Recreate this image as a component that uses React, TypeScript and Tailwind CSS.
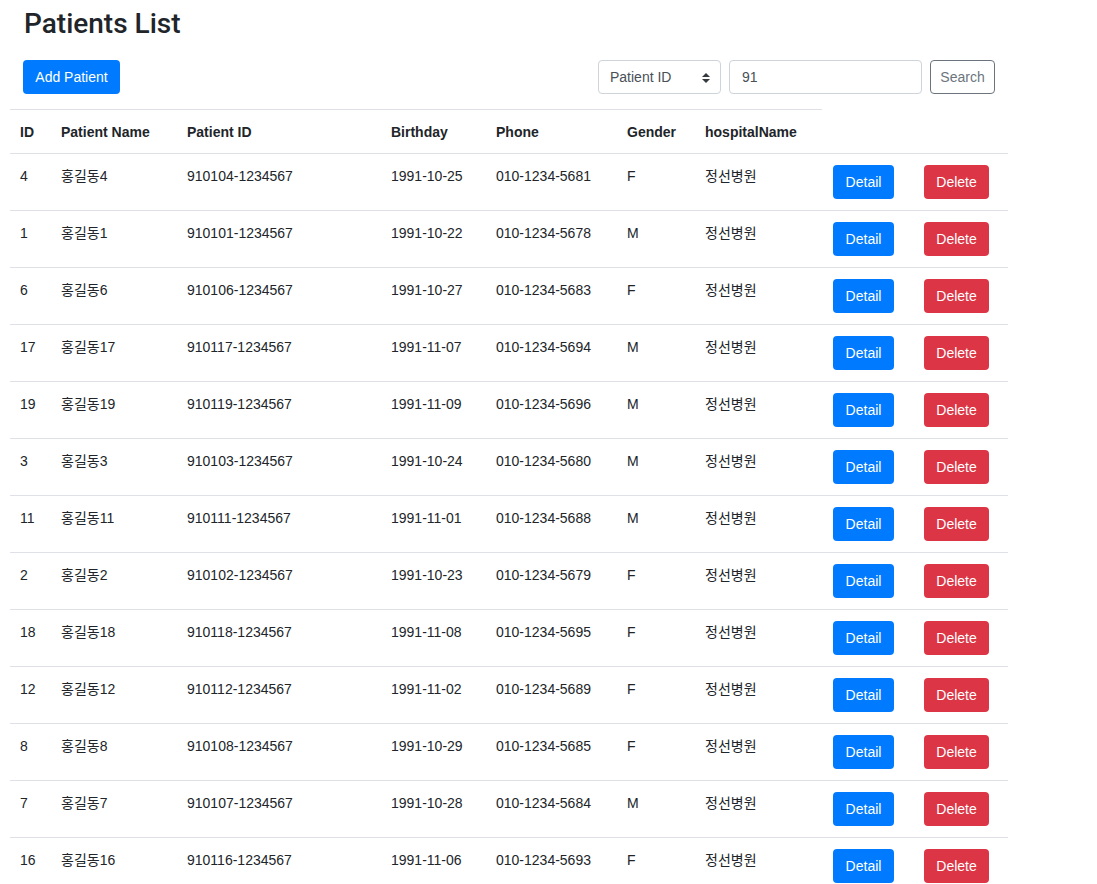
import React from "react";

const rows: [string, string, string, string, string, string][] = [
  ["4", "홍길동4", "910104-1234567", "1991-10-25", "010-1234-5681", "F"],
  ["1", "홍길동1", "910101-1234567", "1991-10-22", "010-1234-5678", "M"],
  ["6", "홍길동6", "910106-1234567", "1991-10-27", "010-1234-5683", "F"],
  ["17", "홍길동17", "910117-1234567", "1991-11-07", "010-1234-5694", "M"],
  ["19", "홍길동19", "910119-1234567", "1991-11-09", "010-1234-5696", "M"],
  ["3", "홍길동3", "910103-1234567", "1991-10-24", "010-1234-5680", "M"],
  ["11", "홍길동11", "910111-1234567", "1991-11-01", "010-1234-5688", "M"],
  ["2", "홍길동2", "910102-1234567", "1991-10-23", "010-1234-5679", "F"],
  ["18", "홍길동18", "910118-1234567", "1991-11-08", "010-1234-5695", "F"],
  ["12", "홍길동12", "910112-1234567", "1991-11-02", "010-1234-5689", "F"],
  ["8", "홍길동8", "910108-1234567", "1991-10-29", "010-1234-5685", "F"],
  ["7", "홍길동7", "910107-1234567", "1991-10-28", "010-1234-5684", "M"],
  ["16", "홍길동16", "910116-1234567", "1991-11-06", "010-1234-5693", "F"],
];

const headers = ["ID", "Patient Name", "Patient ID", "Birthday", "Phone", "Gender", "hospitalName"];

export default function App() {
  return (
    <div
      className="min-h-screen bg-white text-[14px] leading-[21px] text-[#212529]"
      style={{ fontFamily: '"Liberation Sans", "Noto Sans CJK KR", sans-serif' }}
    >
      <h1
        className="pl-[24px] pt-[7px] text-[28px] leading-[34px] font-medium text-[#212529]"
        style={{ fontFamily: 'Roboto, "Liberation Sans", sans-serif' }}
      >
        Patients List
      </h1>
      <div className="mt-[19px] flex items-center justify-between pl-[23px] pr-[102px]">
        <button className="h-[34px] w-[97px] rounded-[4px] bg-[#007bff] text-[14px] text-white">
          Add Patient
        </button>
        <div className="flex items-center gap-[8px]">
          <div className="relative flex h-[34px] w-[123px] items-center rounded-[4px] border border-[#ced4da] pl-[11px] text-[#495057]">
            Patient ID
            <svg className="absolute right-[10px] top-[12px]" width="8" height="10" viewBox="0 0 8 10">
              <path d="M4 0 L8 4 H0 Z" fill="#343a40" />
              <path d="M4 10 L0 6 H8 Z" fill="#343a40" />
            </svg>
          </div>
          <div className="flex h-[34px] w-[193px] items-center rounded-[4px] border border-[#ced4da] pl-[12px] text-[#495057]">
            91
          </div>
          <button className="h-[34px] w-[65px] rounded-[4px] border border-[#6c757d] text-[14px] text-[#6c757d]">
            Search
          </button>
        </div>
      </div>
      <table className="ml-[10px] mt-[15px] w-[998px] table-fixed border-collapse">
        <colgroup>
          <col className="w-[41px]" />
          <col className="w-[126px]" />
          <col className="w-[204px]" />
          <col className="w-[105px]" />
          <col className="w-[131px]" />
          <col className="w-[78px]" />
          <col className="w-[127px]" />
          <col className="w-[91px]" />
          <col className="w-[95px]" />
        </colgroup>
        <thead>
          <tr>
            {headers.map((h) => (
              <th
                key={h}
                className="border-t border-[#dee2e6] px-[10px] pt-[11.5px] pb-[10.5px] text-left align-bottom font-bold"
              >
                {h}
              </th>
            ))}
          </tr>
        </thead>
        <tbody>
          {rows.map((r) => (
            <tr key={r[0]}>
              {r.map((c, i) => (
                <td key={i} className="border-t border-[#dee2e6] px-[10px] pt-[11.5px] pb-[10.5px] align-top">
                  {c}
                </td>
              ))}
              <td className="border-t border-[#dee2e6] px-[10px] pt-[11.5px] pb-[10.5px] align-top">
                정선병원
              </td>
              <td className="border-t border-[#dee2e6] px-[10px] pt-[11px] pb-[11px] align-top">
                <button className="ml-[1px] block h-[34px] w-[61px] rounded-[4px] bg-[#007bff] text-[14px] text-white">
                  Detail
                </button>
              </td>
              <td className="border-t border-[#dee2e6] px-[10px] pt-[11px] pb-[11px] align-top">
                <button className="ml-[1px] block h-[34px] w-[65px] rounded-[4px] bg-[#dc3545] text-[14px] text-white">
                  Delete
                </button>
              </td>
            </tr>
          ))}
        </tbody>
      </table>
    </div>
  );
}
